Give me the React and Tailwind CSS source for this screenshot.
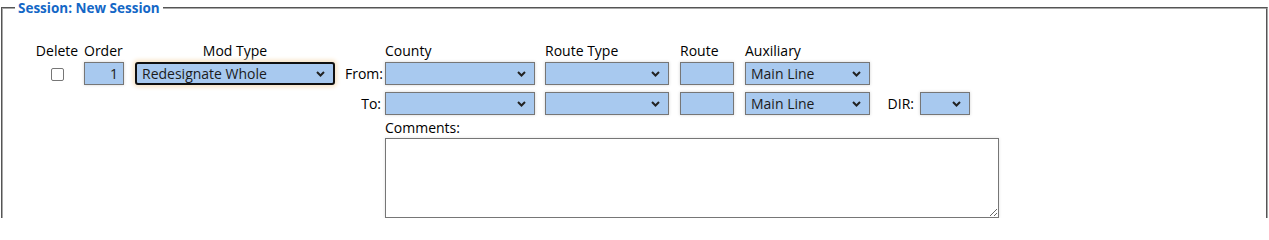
import React from 'react';

const font = { fontFamily: '"Open Sans", "Liberation Sans", sans-serif' };

function Chevron() {
  return (
    <svg
      className="pointer-events-none absolute right-[8px] top-1/2 -translate-y-1/2"
      width="9"
      height="6"
      viewBox="0 0 9 6"
      fill="none"
    >
      <path d="M1 1l3.5 3.5L8 1" stroke="#222" strokeWidth="2" />
    </svg>
  );
}

function Select({ width, value = '', focused = false }) {
  const box = focused
    ? 'border-2 border-[#101010] rounded-[3px] shadow-[0_0_4px_2px_#f7e3c4]'
    : 'border border-[#767676] shadow-[0_0_3px_rgba(0,0,0,0.18)]';
  return (
    <div className={`relative h-[23px] bg-[#a8c9ef] ${box} ${width}`}>
      <div className="flex h-full items-center pl-[5px] text-[14px] text-[#1b1b1b]">{value}</div>
      <Chevron />
    </div>
  );
}

function Box({ width, value = '' }) {
  return (
    <div
      className={`flex h-[23px] items-center justify-end border border-[#767676] bg-[#a8c9ef] pr-[5px] text-[14px] text-[#1b1b1b] shadow-[0_0_3px_rgba(0,0,0,0.18)] ${width}`}
    >
      {value}
    </div>
  );
}

export default function App() {
  return (
    <div className="h-[218px] overflow-hidden bg-white text-[14px] text-black" style={font}>
      <fieldset className="ml-[1px] mr-[1px] h-[260px] rounded-none border-2 border-[#a9a9a9] [border-style:groove]">
        <legend className="ml-[12px] px-[3px] text-[13.5px] font-bold leading-[16px] text-[#1467c6]">
          Session: New Session
        </legend>

        <div className="pl-[31px]">
          {/* header labels */}
          <div className="mt-[27px] flex leading-[16px]">
            <div className="w-[46px] text-center">Delete</div>
            <div className="ml-[4px] w-[40px]">Order</div>
            <div className="ml-[11px] w-[200px] text-center">Mod Type</div>
            <div className="w-[50px]" />
            <div className="w-[150px]">County</div>
            <div className="ml-[10px] w-[124px]">Route Type</div>
            <div className="ml-[11px] w-[54px]">Route</div>
            <div className="ml-[11px] w-[125px]">Auxiliary</div>
          </div>

          {/* from row */}
          <div className="mt-[3px] flex items-center">
            <div className="flex w-[46px] justify-center">
              <span className="mt-[1px] block h-[13px] w-[13px] rounded-[2px] border border-[#767676] bg-white" />
            </div>
            <div className="ml-[4px]">
              <Box width="w-[40px]" value="1" />
            </div>
            <div className="ml-[11px]">
              <Select width="w-[200px]" value="Redesignate Whole" focused />
            </div>
            <div className="w-[50px] pr-[2px] text-right">From:</div>
            <Select width="w-[150px]" />
            <div className="ml-[10px]">
              <Select width="w-[124px]" />
            </div>
            <div className="ml-[11px]">
              <Box width="w-[54px]" />
            </div>
            <div className="ml-[11px]">
              <Select width="w-[125px]" value="Main Line" />
            </div>
          </div>

          {/* to row */}
          <div className="mt-[7px] flex items-center">
            <div className="w-[301px]" />
            <div className="w-[50px] pr-[4px] text-right">To:</div>
            <Select width="w-[150px]" />
            <div className="ml-[10px]">
              <Select width="w-[124px]" />
            </div>
            <div className="ml-[11px]">
              <Box width="w-[54px]" />
            </div>
            <div className="ml-[11px]">
              <Select width="w-[125px]" value="Main Line" />
            </div>
            <div className="w-[50px] pr-[6px] text-right">DIR:</div>
            <Select width="w-[50px]" />
          </div>

          {/* comments */}
          <div className="ml-[351px] mt-[5px] flex flex-col">
            <div className="leading-[16px]">Comments:</div>
            <textarea
              className="mt-[2px] h-[80px] w-[614px] resize border border-[#767676] bg-white shadow-[0_0_3px_rgba(0,0,0,0.12)]"
              readOnly
            />
          </div>
        </div>
      </fieldset>
    </div>
  );
}
